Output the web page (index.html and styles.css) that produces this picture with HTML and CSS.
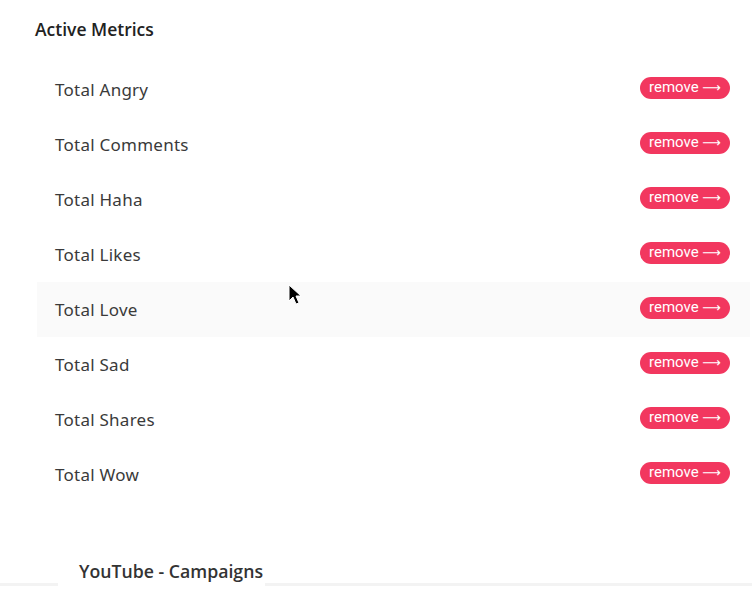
FILE: index.html
```html
<!DOCTYPE html>
<html>
<head>
<meta charset="utf-8">
<link rel="stylesheet" href="styles.css">
</head>
<body>
<div class="page">
  <h2 class="section-title">Active Metrics</h2>
  <ul class="metrics">
    <li class="metric"><span class="metric-name">Total Angry</span><button class="remove">remove <span class="arrow">⟶</span></button></li>
    <li class="metric"><span class="metric-name">Total Comments</span><button class="remove">remove <span class="arrow">⟶</span></button></li>
    <li class="metric"><span class="metric-name">Total Haha</span><button class="remove">remove <span class="arrow">⟶</span></button></li>
    <li class="metric"><span class="metric-name">Total Likes</span><button class="remove">remove <span class="arrow">⟶</span></button></li>
    <li class="metric hover"><span class="metric-name">Total Love</span><button class="remove">remove <span class="arrow">⟶</span></button></li>
    <li class="metric"><span class="metric-name">Total Sad</span><button class="remove">remove <span class="arrow">⟶</span></button></li>
    <li class="metric"><span class="metric-name">Total Shares</span><button class="remove">remove <span class="arrow">⟶</span></button></li>
    <li class="metric"><span class="metric-name">Total Wow</span><button class="remove">remove <span class="arrow">⟶</span></button></li>
  </ul>
  <div class="tabs">
    <div class="tab">YouTube - Campaigns</div>
  </div>
  <svg class="cursor" width="14" height="22" viewBox="0 0 14 22"><path d="M1 1 L1 17 L5 13 L8 20 L11 19 L8 12 L13 12 Z" fill="#000" stroke="#fff" stroke-width="1"/></svg>
</div>
</body>
</html>
```
FILE: styles.css
```css
* { box-sizing: border-box; }
html, body { margin: 0; padding: 0; background: #fff; }
.page {
  position: relative;
  width: 752px;
  height: 609px;
  overflow: hidden;
  font-family: "Noto Sans", sans-serif;
  color: #333;
}
.section-title {
  margin: 0;
  padding: 18px 0 0 35px;
  height: 62px;
  font-family: "Open Sans", sans-serif;
  font-weight: 600;
  font-size: 17.5px;
  color: #222;
  line-height: 22px;
}
.metrics {
  list-style: none;
  margin: 0 2px 0 37px;
  padding: 0;
}
.metric {
  height: 55px;
  display: flex;
  align-items: center;
  justify-content: space-between;
  padding: 0 20px 0 18px;
}
.metric.hover { background: #fafafa; }
.metric-name {
  font-size: 17px;
  letter-spacing: 0.25px;
  color: #3a3a3a;
  line-height: 20px;
}
.remove {
  border: none;
  background: #f2375f;
  color: #fff;
  font-family: "Roboto", sans-serif;
  font-size: 15px;
  height: 22px;
  width: 90px;
  padding: 0 0 1px;
  border-radius: 11px;
  margin-top: -4px;
  line-height: 20px;
  white-space: nowrap;
}
.arrow {
  font-family: "DejaVu Sans", sans-serif;
  font-size: 13px;
}
.tabs {
  margin-top: 56px;
  border-bottom: 3px solid #f3f3f3;
  height: 28px;
  display: flex;
  padding-left: 58px;
}
.tab {
  background: #fff;
  padding: 0 0 0 21px;
  height: 28px;
  margin-bottom: -3px;
  font-family: "Open Sans", sans-serif;
  font-weight: 600;
  font-size: 17.7px;
  color: #333;
  line-height: 26px;
  width: 207px;
  white-space: nowrap;
}
.cursor {
  position: absolute;
  left: 288px;
  top: 284px;
}
```
